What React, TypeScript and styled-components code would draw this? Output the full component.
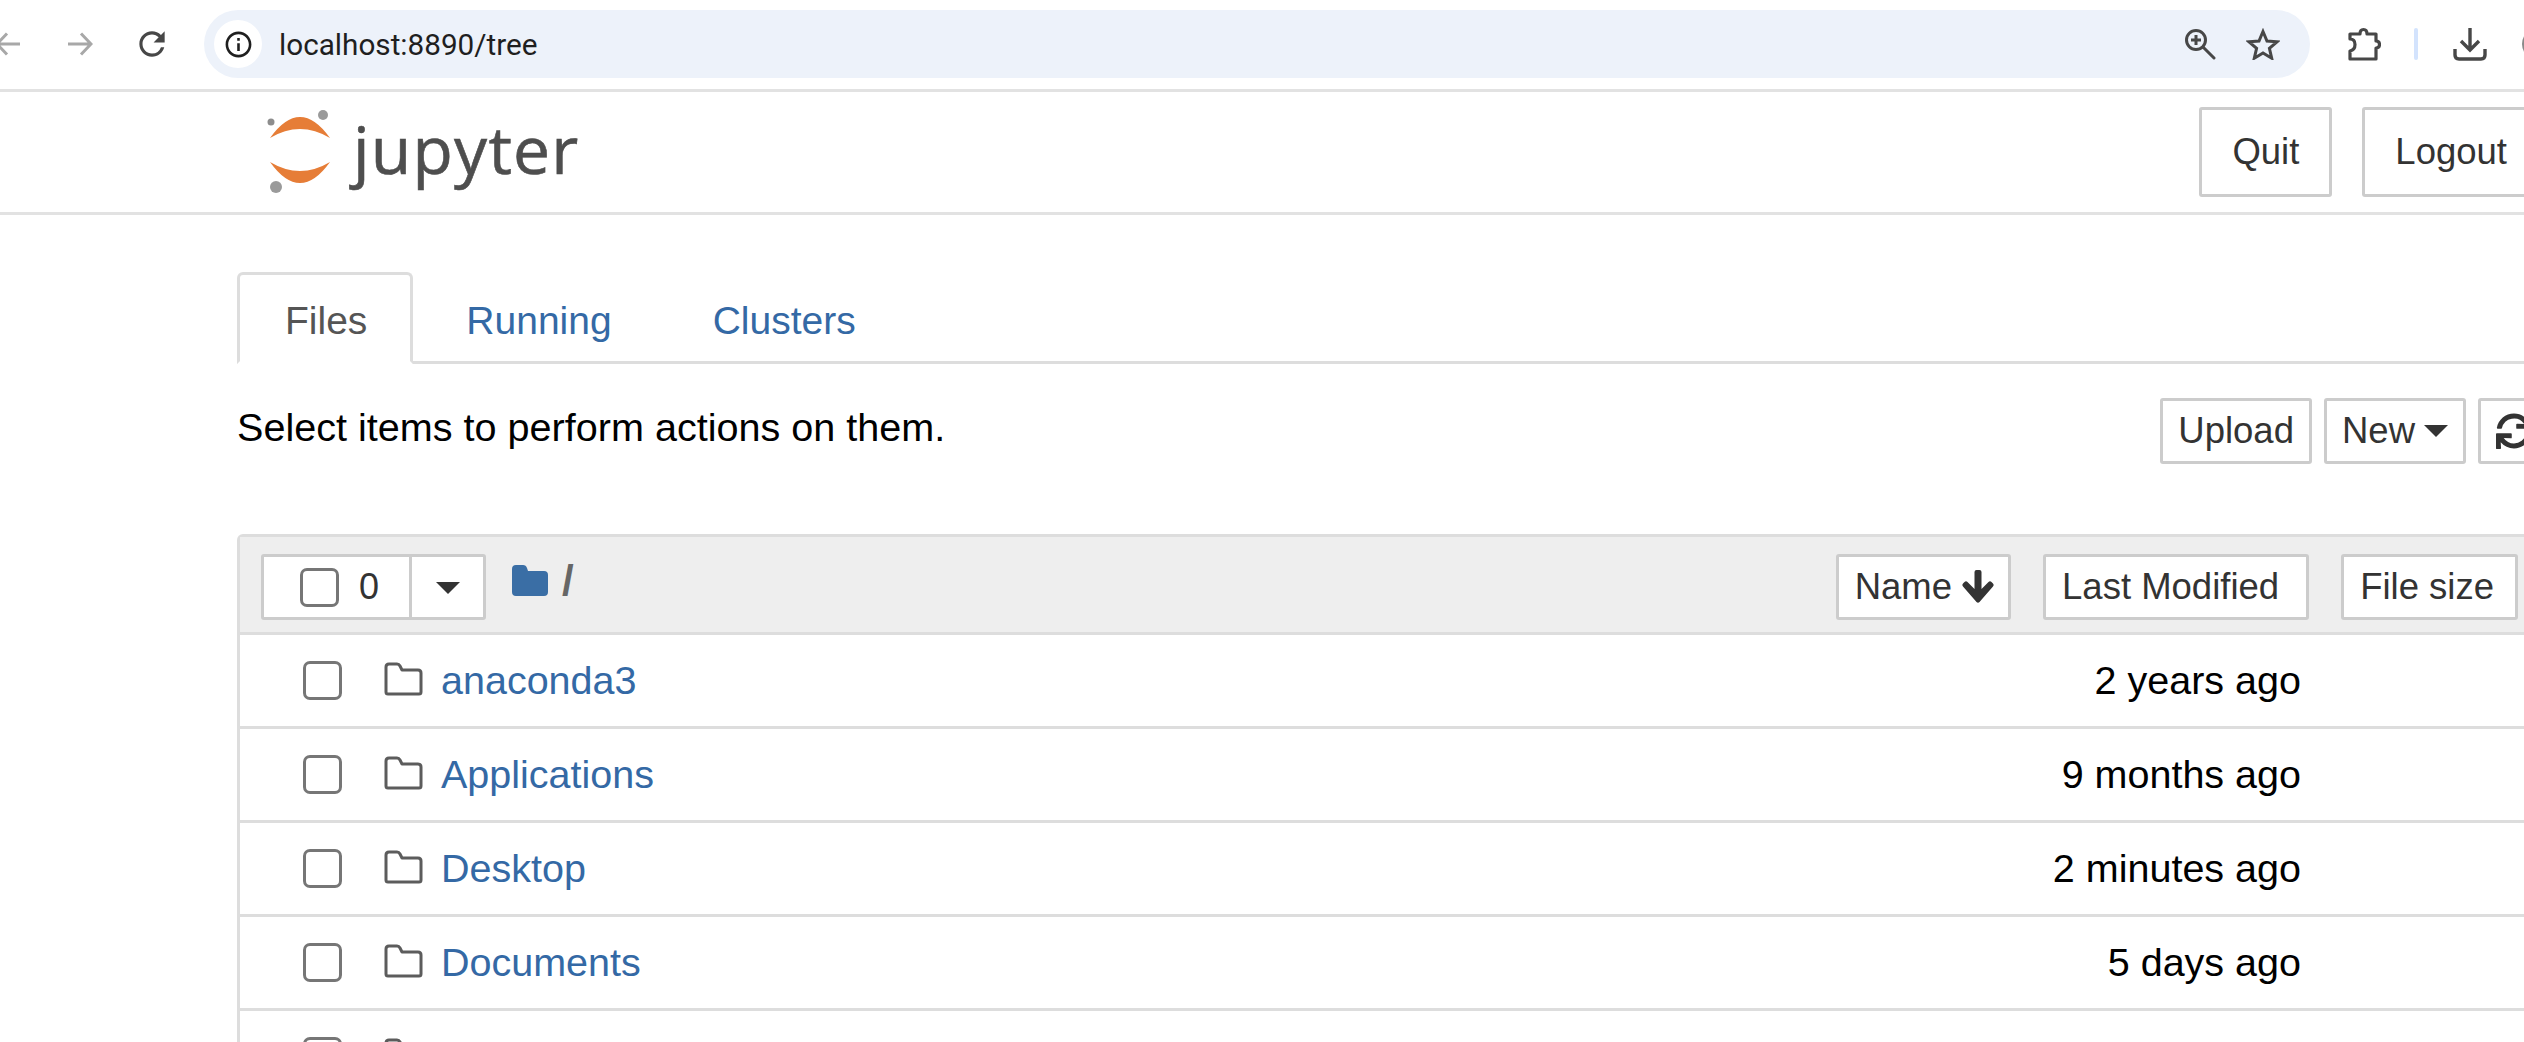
import React from 'react';
import styled, { createGlobalStyle } from 'styled-components';
import { FaSync } from 'react-icons/fa';
import { MdInfoOutline, MdRefresh } from 'react-icons/md';

const GlobalStyle = createGlobalStyle`
  html, body {
    margin: 0;
    padding: 0;
    background: #fff;
  }
  body {
    font-family: "Liberation Sans", Arial, sans-serif;
    color: #000;
  }
  * {
    box-sizing: border-box;
  }
`;

const Page = styled.div`
  width: 2524px;
  height: 1042px;
  overflow: hidden;
  background: #fff;
`;

/* browser chrome */
const BrowserBar = styled.div`
  display: flex;
  align-items: center;
  width: 2560px;
  height: 92px;
  padding-bottom: 1px;
  margin-left: -28px;
  border-bottom: 3px solid #e2e2e2;
`;

const ToolSlot = styled.div`
  flex: none;
  display: flex;
  align-items: center;
  justify-content: center;
  width: 72px;
  height: 40px;
  color: #474747;
`;

const AddressBar = styled.div`
  flex: none;
  display: flex;
  align-items: center;
  width: 2106px;
  height: 68px;
  margin: 0 18px 0 16px;
  padding: 0 30px 0 10px;
  border-radius: 34px;
  background: #edf2fa;
`;

const InfoPill = styled.div`
  flex: none;
  display: flex;
  align-items: center;
  justify-content: center;
  width: 48px;
  height: 48px;
  border-radius: 50%;
  background: #fff;
  color: #1f1f1f;
`;

const UrlText = styled.span`
  flex: 1;
  margin-left: 17px;
  font-family: Roboto, "Liberation Sans", sans-serif;
  font-size: 29.7px;
  color: #1f1f1f;
`;

const AddressIcons = styled.div`
  display: flex;
  align-items: center;
  gap: 30px;
  color: #474747;
`;

const ToolDivider = styled.div`
  flex: none;
  width: 4px;
  height: 32px;
  margin: 0 16px 0 14px;
  border-radius: 2px;
  background: #d3e3fd;
`;

const Avatar = styled.div`
  flex: none;
  width: 32px;
  height: 32px;
  margin-left: 16px;
  border-radius: 50%;
  background: #8a8a8a;
`;

/* jupyter header */
const SiteHeader = styled.header`
  display: flex;
  align-items: center;
  width: 2540px;
  height: 123px;
  padding: 0 0 0 265px;
  border-bottom: 3px solid #e2e2e2;
`;

const LogoLink = styled.a`
  display: flex;
  align-items: center;
  gap: 16px;
`;

const LogoText = styled.span`
  margin-bottom: 8px;
  font-family: "Open Sans", "Noto Sans", sans-serif;
  font-size: 66px;
  line-height: 88px;
  letter-spacing: 1.2px;
  color: #4e4e4e;
  -webkit-text-stroke: 0.6px #4e4e4e;
`;

const HeaderActions = styled.div`
  display: flex;
  gap: 30px;
  margin-left: auto;
`;

const Button = styled.button`
  flex: none;
  display: inline-flex;
  align-items: center;
  justify-content: center;
  height: 66px;
  padding: 0 15px;
  border: 3px solid #ccc;
  border-radius: 3px;
  background: #fff;
  font-family: "Liberation Sans", Arial, sans-serif;
  font-size: 36.5px;
  color: #333;
`;

const HeaderButton = styled(Button)`
  height: 90px;
  padding: 0 30px;
`;

const SortButton = styled(Button)<{ $trail: number }>`
  padding: 0 ${props => props.$trail}px 0 16px;
`;

/* main column */
const Main = styled.main`
  width: 2330px;
  margin-left: 237px;
  padding-top: 57px;
`;

const TabList = styled.ul`
  display: flex;
  height: 92px;
  margin: 0;
  padding: 0;
  list-style: none;
  border-bottom: 3px solid #ddd;
`;

const Tab = styled.li<{ $active?: boolean }>`
  display: flex;
  align-items: center;
  height: 92px;
  margin-right: 5px;
  padding: 5px ${props => (props.$active ? 43 : 45)}px 0 45px;
  border: 3px solid ${props => (props.$active ? '#ddd' : 'transparent')};
  border-bottom-color: ${props => (props.$active ? '#fff' : 'transparent')};
  border-radius: 6px 6px 0 0;
  background: ${props => (props.$active ? '#fff' : 'transparent')};
  font-size: 39px;
  color: ${props => (props.$active ? '#555' : '#3469a5')};
`;

const ActionRow = styled.div`
  display: flex;
  align-items: flex-start;
  justify-content: space-between;
  height: 170px;
  padding: 34px 17px 0 0;
`;

const Hint = styled.p`
  margin: 0;
  padding-top: 6px;
  font-size: 39.6px;
  line-height: 46px;
`;

const ActionButtons = styled.div`
  display: flex;
  gap: 12px;
`;

const Caret = styled.span`
  display: inline-block;
  width: 0;
  height: 0;
  border-top: 12px solid #333;
  border-left: 12px solid transparent;
  border-right: 12px solid transparent;
`;

const NewCaret = styled(Caret)`
  margin-left: 9px;
`;

const FileList = styled.section`
  border: 3px solid #ddd;
  border-bottom: 0;
  border-radius: 6px 0 0 0;
`;

const ListHeader = styled.div`
  display: flex;
  align-items: center;
  height: 98px;
  padding: 5px 46px 0 21px;
  background: #eee;
  border-bottom: 3px solid #ddd;
`;

const SelectGroup = styled.div`
  display: flex;
  width: 225px;
  height: 66px;
  border: 3px solid #ccc;
  border-radius: 3px;
  background: #fff;
`;

const SelectCount = styled.div`
  display: flex;
  align-items: center;
  width: 148px;
  padding-left: 36px;
  border-right: 3px solid #ccc;
  font-size: 36px;
  color: #333;
`;

const SelectMenu = styled.div`
  display: flex;
  align-items: center;
  justify-content: center;
  flex: 1;
  padding-top: 2px;
`;

const CheckBox = styled.input.attrs({ type: 'checkbox' })`
  flex: none;
  appearance: none;
  width: 39px;
  height: 39px;
  margin: 0;
  border: 3px solid #767676;
  border-radius: 7px;
  background: #fff;
`;

const CountValue = styled.span`
  margin-left: 20px;
`;

const Breadcrumb = styled.div`
  display: flex;
  align-items: center;
  gap: 14px;
  margin: -13px 0 0 26px;
  font-size: 42px;
  font-weight: bold;
  color: #666;
`;

const SortButtons = styled.div`
  display: flex;
  gap: 32px;
  margin-left: auto;
`;

const FileRow = styled.div`
  display: flex;
  align-items: center;
  height: 94px;
  padding: 0 263px 1px 63px;
  border-bottom: 3px solid #ddd;
`;

const FolderLink = styled.a`
  flex: 1;
  display: flex;
  align-items: center;
  gap: 18px;
  margin: 1px 0 0 42px;
  font-size: 39.5px;
  color: #3469a5;
  svg {
    margin-top: -4px;
  }
`;

const Modified = styled.span`
  margin-top: 1px;
  font-size: 39.5px;
`;

const JupyterMark = () => (
  <svg width="72" height="88" viewBox="0 0 72 88">
    <path d="M5 30 Q35 -12 65 30 Q35 12 5 30 Z" fill="#e67d37" />
    <path d="M5 54 Q35 96 65 54 Q35 72 5 54 Z" fill="#e67d37" />
    <circle cx="58" cy="7" r="5" fill="#9a9a9a" />
    <circle cx="6" cy="14" r="3.5" fill="#8d8d8d" />
    <circle cx="11" cy="79" r="6" fill="#9a9a9a" />
  </svg>
);

const BackArrow = () => (
  <svg width="26" height="24" viewBox="0 0 26 24" fill="none" stroke="#a8a8a8" strokeWidth="3">
    <path d="M25 12H2M12 1.5L2 12l10 10.5" />
  </svg>
);

const ForwardArrow = () => (
  <svg width="26" height="24" viewBox="0 0 26 24" fill="none" stroke="#a8a8a8" strokeWidth="3">
    <path d="M1 12h23M14 1.5L24 12 14 22.5" />
  </svg>
);

const ZoomGlass = () => (
  <svg width="32" height="32" viewBox="0 0 32 32" fill="none" stroke="currentColor" strokeWidth="3">
    <circle cx="12" cy="12" r="9.5" />
    <path d="M12 7v10M7 12h10" />
    <path d="M19 19l11 11" strokeLinecap="round" />
  </svg>
);

const StarOutline = () => (
  <svg width="34" height="32" viewBox="0 0 34 32" fill="none" stroke="currentColor" strokeWidth="3">
    <path d="M17 3.5l4 9.5 10 .8-7.6 6.6 2.3 9.8L17 25l-8.7 5.2 2.3-9.8L3 13.8l10-.8z" />
  </svg>
);

const PuzzlePiece = () => (
  <svg width="34" height="34" viewBox="0 0 34 34" fill="none" stroke="currentColor" strokeWidth="3.2" strokeLinejoin="round">
    <path d="M3 7h10q0-4.5 3.5-4.5T20 7h9v7q3.5 0 3.5 3.5T29 21v11H3v-8q5-1 5-6.5T3 12z" />
  </svg>
);

const DownloadTray = () => (
  <svg width="34" height="34" viewBox="0 0 34 34" fill="none" stroke="currentColor" strokeWidth="3.4">
    <path d="M17 1v21M8 14l9 9 9-9" />
    <path d="M2 22v6q0 4 4 4h22q4 0 4-4v-6" />
  </svg>
);

const FolderOutline = () => (
  <svg width="39" height="34" viewBox="0 0 39 34" fill="none" stroke="#5c5c5c" strokeWidth="3" strokeLinejoin="round">
    <path d="M2 30V5q0-3 3-3h8q2 0 3 2l2 4h16q3 0 3 3v19q0 2-2 2H4q-2 0-2-2z" />
  </svg>
);

const FolderFilled = () => (
  <svg width="36" height="31" viewBox="0 0 36 31">
    <path d="M0 27V4q0-4 4-4h7q3 0 4 3l1 3h16q4 0 4 4v17q0 4-4 4H4q-4 0-4-4z" fill="#3a6ea5" />
  </svg>
);

const SortArrowIcon = styled.svg`
  margin-left: 9px;
  fill: #333;
`;

const SortArrow = () => (
  <SortArrowIcon width="34" height="36" viewBox="0 0 34 36">
    <path d="M13.5 3q0-2 2-2h3q2 0 2 2v17l7-7q1.5-1.5 3 0l1.5 1.500q1.500 1.500 0 3L18.500 33q-1.500 1.500-3 0L2 17.500q-1.500-1.500 0-3L3.500 13q1.500-1.500 3 0l7 7z" />
  </SortArrowIcon>
);

const files = [
  { name: 'anaconda3', modified: '2 years ago' },
  { name: 'Applications', modified: '9 months ago' },
  { name: 'Desktop', modified: '2 minutes ago' },
  { name: 'Documents', modified: '5 days ago' },
  { name: '', modified: '' }
];

const App: React.FC = () => {
  return (
    <Page>
      <GlobalStyle />
      <BrowserBar>
        <ToolSlot><BackArrow /></ToolSlot>
        <ToolSlot><ForwardArrow /></ToolSlot>
        <ToolSlot><MdRefresh size={38} /></ToolSlot>
        <AddressBar>
          <InfoPill><MdInfoOutline size={31} /></InfoPill>
          <UrlText>localhost:8890/tree</UrlText>
          <AddressIcons>
            <ZoomGlass />
            <StarOutline />
          </AddressIcons>
        </AddressBar>
        <ToolSlot><PuzzlePiece /></ToolSlot>
        <ToolDivider />
        <ToolSlot><DownloadTray /></ToolSlot>
        <Avatar />
      </BrowserBar>

      <SiteHeader>
        <LogoLink>
          <JupyterMark />
          <LogoText>jupyter</LogoText>
        </LogoLink>
        <HeaderActions>
          <HeaderButton>Quit</HeaderButton>
          <HeaderButton>Logout</HeaderButton>
        </HeaderActions>
      </SiteHeader>

      <Main>
        <TabList>
          <Tab $active>Files</Tab>
          <Tab>Running</Tab>
          <Tab>Clusters</Tab>
        </TabList>

        <ActionRow>
          <Hint>Select items to perform actions on them.</Hint>
          <ActionButtons>
            <Button>Upload</Button>
            <Button>New<NewCaret /></Button>
            <Button><FaSync size={36} /></Button>
          </ActionButtons>
        </ActionRow>

        <FileList>
          <ListHeader>
            <SelectGroup>
              <SelectCount>
                <CheckBox />
                <CountValue>0</CountValue>
              </SelectCount>
              <SelectMenu><Caret /></SelectMenu>
            </SelectGroup>
            <Breadcrumb>
              <FolderFilled />
              <span>/</span>
            </Breadcrumb>
            <SortButtons>
              <SortButton $trail={13}>Name<SortArrow /></SortButton>
              <SortButton $trail={27}>Last Modified</SortButton>
              <SortButton $trail={21}>File size</SortButton>
            </SortButtons>
          </ListHeader>
          {files.map((file, i) => (
            <FileRow key={i}>
              <CheckBox />
              <FolderLink>
                <FolderOutline />
                {file.name}
              </FolderLink>
              <Modified>{file.modified}</Modified>
            </FileRow>
          ))}
        </FileList>
      </Main>
    </Page>
  );
};

export default App;
